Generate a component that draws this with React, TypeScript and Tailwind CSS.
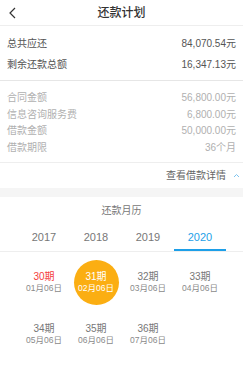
import React from "react";

const font = { fontFamily: '"Liberation Sans", "Noto Sans CJK SC", sans-serif' };

const periods = [
  { p: "30期", d: "01月06日", state: "overdue" },
  { p: "31期", d: "02月06日", state: "current" },
  { p: "32期", d: "03月06日", state: "normal" },
  { p: "33期", d: "04月06日", state: "normal" },
  { p: "34期", d: "05月06日", state: "normal" },
  { p: "35期", d: "06月06日", state: "normal" },
  { p: "36期", d: "07月06日", state: "normal" },
];

export default function App() {
  return (
    <div className="w-[243px] h-[387px] bg-white overflow-hidden" style={font}>
      {/* Header */}
      <div className="relative h-[26px] flex items-center justify-center border-b border-[#eeeeee]">
        <svg className="absolute left-[8px] top-[7px]" width="9" height="12" viewBox="0 0 9 12">
          <polyline points="7,1 2,6 7,11" fill="none" stroke="#333" strokeWidth="1.2" />
        </svg>
        <span className="text-[12px] font-medium text-[#333] leading-none">还款计划</span>
      </div>

      {/* Totals */}
      <div className="pt-[7px] pb-[5px] px-[7px] border-b border-[#e6e6e6] text-[10px] text-[#555]">
        <div className="h-[21px] flex items-center justify-between">
          <span>总共应还</span>
          <span>84,070.54元</span>
        </div>
        <div className="h-[21px] flex items-center justify-between">
          <span>剩余还款总额</span>
          <span>16,347.13元</span>
        </div>
      </div>

      {/* Details */}
      <div className="pt-[8px] pb-[6px] px-[7px] border-b border-[#eeeeee] text-[10px] text-[#b0b0b0]">
        {[
          ["合同金额", "56,800.00元"],
          ["信息咨询服务费", "6,800.00元"],
          ["借款金额", "50,000.00元"],
          ["借款期限", "36个月"],
        ].map(([l, r]) => (
          <div key={l} className="h-[16.7px] flex items-center justify-between">
            <span>{l}</span>
            <span>{r}</span>
          </div>
        ))}
      </div>

      {/* See details */}
      <div className="h-[25px] flex items-center justify-end pr-[3px] text-[10px] text-[#666]">
        <span>查看借款详情</span>
        <svg className="ml-[7px]" width="7" height="5" viewBox="0 0 7 5">
          <polyline points="1,4 3.5,1.5 6,4" fill="none" stroke="#7cc3ee" strokeWidth="1" />
        </svg>
      </div>

      <div className="h-[9px] bg-[#f5f5f5]" />

      {/* Calendar */}
      <div className="h-[28px] flex items-center justify-center text-[10px] text-[#777]">还款月历</div>
      <div className="border-b border-[#eeeeee]">
        <div className="px-[18px] grid grid-cols-4 w-[244px]">
          {["2017", "2018", "2019", "2020"].map((y, i) => (
            <div
              key={y}
              className={
                i === 3
                  ? "h-[26px] flex items-center justify-center text-[11px] text-[#1d9fe8] border-b-2 border-[#1d9fe8]"
                  : "h-[26px] flex items-center justify-center text-[11px] text-[#777] border-b-2 border-transparent"
              }
            >
              {y}
            </div>
          ))}
        </div>
      </div>

      <div className="pt-[5px] px-[18px] grid grid-cols-4 w-[244px]">
        {periods.map((it) => (
          <div key={it.p} className="h-[52px] flex items-center justify-center">
            {it.state === "current" ? (
              <div className="w-[45px] h-[45px] rounded-full bg-[#fbae12] flex flex-col items-center justify-center text-white">
                <span className="text-[10px] leading-[12px]">{it.p}</span>
                <span className="text-[8.5px] leading-[11px]">{it.d}</span>
              </div>
            ) : (
              <div className="flex flex-col items-center">
                <span
                  className={
                    it.state === "overdue"
                      ? "text-[10px] leading-[12px] text-[#f43c3c]"
                      : "text-[10px] leading-[12px] text-[#777]"
                  }
                >
                  {it.p}
                </span>
                <span className="text-[8.5px] leading-[11px] text-[#8a8a8a]">{it.d}</span>
              </div>
            )}
          </div>
        ))}
      </div>
    </div>
  );
}
